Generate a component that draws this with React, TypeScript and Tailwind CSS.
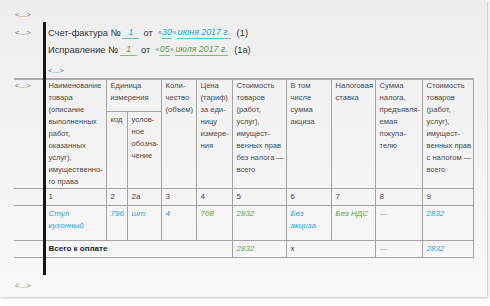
const BLUE = "text-[#2f9bd6]";
const GREEN = "text-[#5b9f48]";

const Dots = () => (
  <span className="inline-block text-[8px] leading-[10px] text-[#7a7a7a] align-top">&lt;...&gt;</span>
);

const H = "border border-[#a3a3a3] align-top px-[4px] pt-0 text-[7.6px] leading-[12px] text-[#4a4a4a] font-normal text-left whitespace-nowrap";
const C = "border border-[#a3a3a3] px-[4px] py-0 text-[8px] leading-[12px] text-left whitespace-nowrap";

const App = () => {
  return (
    <div className="w-[490px] h-[306px] bg-white font-['Liberation_Sans',Arial,sans-serif] text-[8px] leading-[10px]">
      <div className="relative w-[487px] h-[297px] bg-linear-to-b from-[#eeeeee] to-[#f8f8f8] shadow-[1px_1px_2px_rgba(0,0,0,0.25)]">
        <div className="absolute left-[43px] top-[22px] w-[2.5px] h-[253px] bg-[#151515]" />

        <div className="pt-[10px]">
          <div className="pl-[15px] h-[10px]">
            <Dots />
          </div>

          <div className="mt-[5px] flex h-[15px] items-center">
            <div className="w-[48px] pl-[15px] flex items-center">
              <Dots />
            </div>
            <div className="flex items-center text-[9.3px] leading-[12px] text-[#333]">
              <span>Счет-фактура №</span>
              <span className={`ml-[2px] inline-block w-[17px] text-center italic text-[8.8px] border-b border-[#6cb6e0] ${BLUE}`}>1</span>
              <span className="ml-[4px]">от</span>
              <span className="ml-[5px] text-[7px] text-[#888]">«</span>
              <span className={`italic text-[8.8px] border-b border-[#6cb6e0] px-[0.5px] ${BLUE}`}>30</span>
              <span className="text-[7px] text-[#888]">»</span>
              <span className={`ml-[1px] italic text-[8.8px] border-b border-[#6cb6e0] px-[0.5px] ${BLUE}`}>июня 2017 г.</span>
              <span className="ml-[6px]">(1)</span>
            </div>
          </div>

          <div className="mt-[2px] flex h-[15px] items-center">
            <div className="w-[48px]" />
            <div className="flex items-center text-[9.3px] leading-[12px] text-[#333]">
              <span>Исправление №</span>
              <span className={`ml-[2px] inline-block w-[17px] text-center italic text-[8.8px] border-b border-[#86bd74] ${GREEN}`}>1</span>
              <span className="ml-[4px]">от</span>
              <span className="ml-[5px] text-[7px] text-[#888]">«</span>
              <span className={`italic text-[8.8px] border-b border-[#86bd74] px-[0.5px] ${GREEN}`}>05</span>
              <span className="text-[7px] text-[#888]">»</span>
              <span className={`ml-[1px] italic text-[8.8px] border-b border-[#86bd74] px-[0.5px] ${GREEN}`}>июля 2017 г.</span>
              <span className="ml-[6px]">(1а)</span>
            </div>
          </div>

          <div className="mt-[9px] h-[11px] pl-[48px]">
            <Dots />
          </div>

          <table className="mt-[1px] ml-[14px] w-[459px] table-fixed border-collapse">
            <colgroup>
              <col className="w-[30px]" />
              <col className="w-[62px]" />
              <col className="w-[21px]" />
              <col className="w-[34px]" />
              <col className="w-[35px]" />
              <col className="w-[36px]" />
              <col className="w-[54px]" />
              <col className="w-[45px]" />
              <col className="w-[44px]" />
              <col className="w-[47px]" />
              <col className="w-[51px]" />
            </colgroup>
            <thead>
              <tr className="h-[32px] border-t-2 border-[#ababab]">
                <th rowSpan={2} className="align-top pt-[1px] pl-[1px] text-left font-normal border-b border-[#a3a3a3]">
                  <Dots />
                </th>
                <th rowSpan={2} className={H}>
                  Наименование<br />товара<br />(описание<br />выполненных<br />работ,<br />оказанных<br />услуг),<br />имущественно-<br />го права
                </th>
                <th colSpan={2} className={H}>
                  Единица<br />измерения
                </th>
                <th rowSpan={2} className={H}>
                  Коли-<br />чество<br />(объем)
                </th>
                <th rowSpan={2} className={H}>
                  Цена<br />(тариф)<br />за еди-<br />ницу<br />измере-<br />ния
                </th>
                <th rowSpan={2} className={H}>
                  Стоимость<br />товаров<br />(работ,<br />услуг),<br />имущест-<br />венных прав<br />без налога —<br />всего
                </th>
                <th rowSpan={2} className={H}>
                  В том<br />числе<br />сумма<br />акциза
                </th>
                <th rowSpan={2} className={H}>
                  Налоговая<br />ставка
                </th>
                <th rowSpan={2} className={H}>
                  Сумма<br />налога,<br />предъявля-<br />емая<br />покупа-<br />телю
                </th>
                <th rowSpan={2} className={H}>
                  Стоимость<br />товаров<br />(работ,<br />услуг),<br />имущест-<br />венных прав<br />с налогом —<br />всего
                </th>
              </tr>
              <tr className="h-[76px]">
                <th className={`${H} pt-[2px]`}>код</th>
                <th className={`${H} pt-[2px]`}>
                  услов-<br />ное<br />обозна-<br />чение
                </th>
              </tr>
            </thead>
            <tbody>
              <tr className="h-[17px] text-[#444]">
                <td className="border-b border-[#a3a3a3]" />
                {["1", "2", "2а", "3", "4", "5", "6", "7", "8", "9"].map((n) => (
                  <td key={n} className={`${C} align-middle`}>
                    {n}
                  </td>
                ))}
              </tr>
              <tr className="h-[35px] italic">
                <td className="border-b border-[#a3a3a3]" />
                <td className={`${C} align-top pt-[2px] ${BLUE}`}>
                  Стул<br />кухонный
                </td>
                <td className={`${C} align-top pt-[2px] ${BLUE}`}>796</td>
                <td className={`${C} align-top pt-[2px] ${BLUE}`}>шт.</td>
                <td className={`${C} align-top pt-[2px] ${BLUE}`}>4</td>
                <td className={`${C} align-top pt-[2px] ${GREEN}`}>708</td>
                <td className={`${C} align-top pt-[2px] ${GREEN}`}>2832</td>
                <td className={`${C} align-top pt-[2px] ${BLUE}`}>
                  Без<br />акциза
                </td>
                <td className={`${C} align-top pt-[2px] ${GREEN}`}>Без НДС</td>
                <td className={`${C} align-top pt-[2px] text-[#aaa]`}>—</td>
                <td className={`${C} align-top pt-[2px] ${BLUE}`}>2832</td>
              </tr>
              <tr className="h-[17px]">
                <td className="border-b border-[#a3a3a3]" />
                <td colSpan={5} className={`${C} font-bold text-[#222]`}>
                  Всего к оплате
                </td>
                <td className={`${C} italic ${GREEN}`}>2832</td>
                <td colSpan={2} className={`${C} text-[#333]`}>
                  x
                </td>
                <td className={`${C} text-[#aaa]`}>—</td>
                <td className={`${C} italic ${BLUE}`}>2832</td>
              </tr>
            </tbody>
          </table>

          <div className="mt-[23px] pl-[15px] h-[10px]">
            <Dots />
          </div>
        </div>
      </div>
    </div>
  );
};

export default App;
